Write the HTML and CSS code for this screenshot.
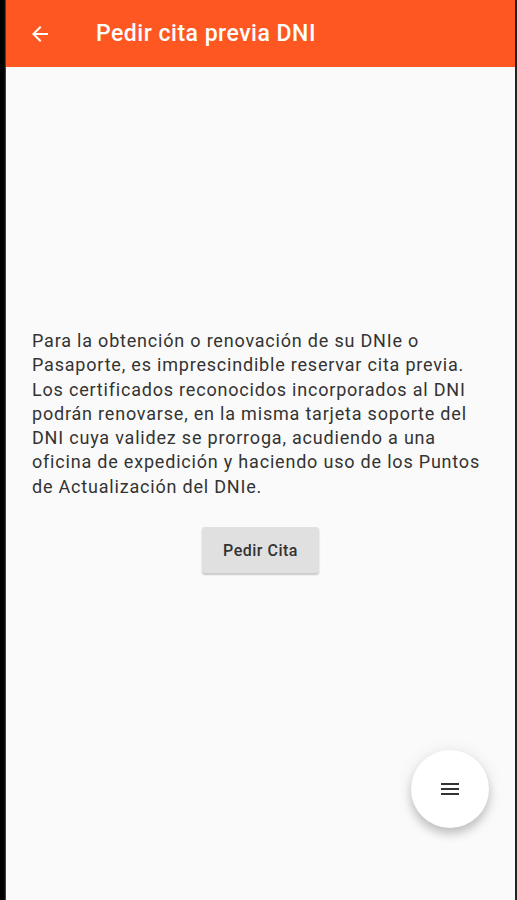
FILE: index.html
```html
<!DOCTYPE html>
<html lang="es">
<head>
    <meta charset="UTF-8">
    <meta name="viewport" content="width=device-width, initial-scale=1.0">
    <title>Pedir cita previa DNI</title>
    <link rel="stylesheet" href="styles.css">
</head>
<body>
    <div class="edge-left"></div>

    <div class="screen">
        <header class="app-bar">
            <button class="back" type="button" aria-label="Volver">
                <svg width="24" height="24" viewBox="0 0 24 24">
                    <path d="M20 11H7.83l5.59-5.59L12 4l-8 8 8 8 1.41-1.41L7.83 13H20v-2z" fill="#fff"/>
                </svg>
            </button>
            <h1 class="title">Pedir cita previa DNI</h1>
        </header>

        <main class="content">
            <p class="info">Para la obtención o renovación de su DNIe o Pasaporte, es imprescindible reservar cita previa. Los certificados reconocidos incorporados al DNI podrán renovarse, en la misma tarjeta soporte del DNI cuya validez se prorroga, acudiendo a una oficina de expedición y haciendo uso de los Puntos de Actualización del DNIe.</p>

            <button class="btn-cita" type="button">Pedir Cita</button>
        </main>

        <button class="fab" type="button" aria-label="Menú">
            <svg width="24" height="24" viewBox="0 0 24 24">
                <path d="M3 18h18v-2H3v2zm0-5h18v-2H3v2zm0-7v2h18V6H3z" fill="#333"/>
            </svg>
        </button>
    </div>

    <div class="edge-right"></div>
</body>
</html>
```

FILE: styles.css
```css
body {
    font-family: Roboto, "Noto Sans", sans-serif;
    background-color: #000;
    margin: 0;
    padding: 0;
    display: flex;
    height: 900px;
    overflow: hidden;
}

.edge-left {
    width: 6px;
    background: linear-gradient(to right, #000 0, #000 70%, #555 100%);
    flex-shrink: 0;
}

.edge-right {
    width: 2px;
    background-color: #222;
    flex-shrink: 0;
}

.screen {
    flex: 1;
    position: relative;
    background-color: #fafafa;
    display: flex;
    flex-direction: column;
}

.app-bar {
    height: 67px;
    background-color: #ff5722;
    display: flex;
    align-items: center;
    padding-left: 22px;
    box-sizing: border-box;
}

.back {
    width: 24px;
    height: 24px;
    padding: 0;
    border: none;
    background: none;
    display: flex;
}

.title {
    margin: 0 0 0 44px;
    color: #fff;
    font-size: 23px;
    font-weight: 500;
    letter-spacing: 0.5px;
}

.content {
    padding: 262px 26px 0 26px;
    display: flex;
    flex-direction: column;
    align-items: center;
}

.info {
    margin: 0;
    color: #333;
    font-size: 18px;
    line-height: 24.3px;
    letter-spacing: 0.8px;
    align-self: stretch;
}

.btn-cita {
    margin-top: 28px;
    width: 117px;
    height: 46px;
    background-color: #e0e0e0;
    border: none;
    border-radius: 3px;
    box-shadow: 0 2px 2px rgba(0, 0, 0, 0.2);
    font-family: Roboto, sans-serif;
    font-size: 16px;
    font-weight: 500;
    letter-spacing: 0.5px;
    color: #333;
}

.fab {
    position: absolute;
    left: 405px;
    top: 750px;
    width: 78px;
    height: 78px;
    border-radius: 50%;
    border: none;
    background-color: #fff;
    box-shadow: 0 6px 10px rgba(0, 0, 0, 0.2), 0 1px 18px rgba(0, 0, 0, 0.08);
    display: flex;
    align-items: center;
    justify-content: center;
}
```
